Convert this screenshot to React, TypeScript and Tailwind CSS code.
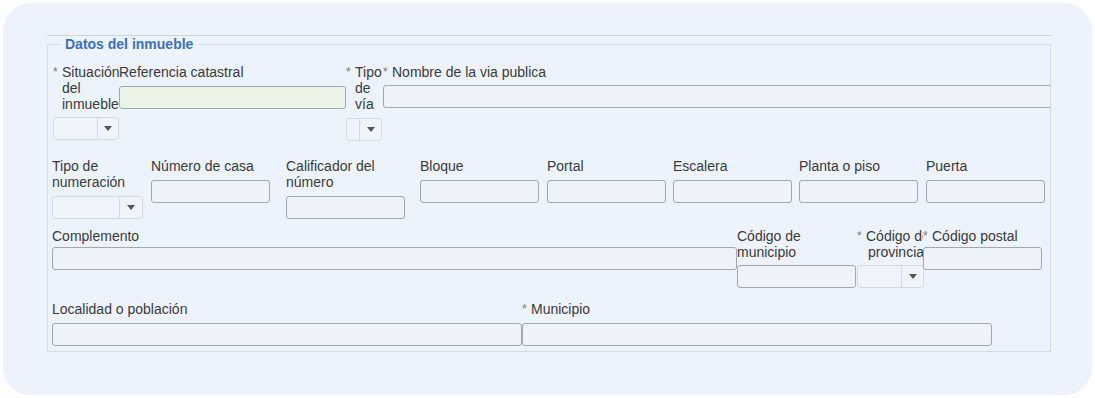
import React from 'react';

const font = { fontFamily: '"Liberation Sans", Arial, sans-serif' };

function Star() {
  return <span className="w-[9px] shrink-0 text-[12px] leading-[16px] text-[#777]">*</span>;
}

function Label({ lines, req }: { lines: string[]; req?: boolean }) {
  return (
    <div className="flex text-[14px] leading-[16px] text-[#3a3a3a]">
      {req && <Star />}
      <div className="whitespace-nowrap">
        {lines.map((l) => (
          <div key={l}>{l}</div>
        ))}
      </div>
    </div>
  );
}

function Input({ w, mt, green }: { w: string; mt: string; green?: boolean }) {
  return (
    <div
      className={`${w} ${mt} h-[23px] rounded-[3px] border border-[#a3a8ae] ${green ? 'bg-[#ebf3e7]' : 'bg-[#eef3fb]'}`}
    />
  );
}

function Select({ w, mt, arrow }: { w: string; mt: string; arrow: string }) {
  return (
    <div className={`${w} ${mt} flex h-[23px] rounded-[3px] border border-[#d3d9e2] bg-[#eff4fb]`}>
      <div className="flex-1" />
      <div className={`${arrow} flex items-center justify-center border-l border-[#d3d9e2]`}>
        <svg width="8" height="5" viewBox="0 0 8 5">
          <path d="M0 0h8L4 5z" fill="#555" />
        </svg>
      </div>
    </div>
  );
}

export default function App() {
  return (
    <div className="h-[398px] w-[1095px] bg-white p-[3px]" style={font}>
      <div className="h-full rounded-[28px] border border-[#eef1f5] bg-[#edf3fc] pl-[43px] pt-[31px]">
        <div className="w-[1004px] border-t border-[#cdd4dd]" />
        <fieldset className="w-[1004px] min-w-0 overflow-hidden border border-[#d5dbe3] pb-[5px] pl-[4px]">
          <legend className="ml-[9px] px-[4px] text-[14px] font-bold leading-[16px] text-[#3b6fc4]">
            Datos del inmueble
          </legend>

          {/* fila 1 */}
          <div className="mt-[12px] flex overflow-hidden pl-[1px]">
            <div className="w-[66px] shrink-0">
              <Label req lines={['Situación', 'del', 'inmueble']} />
              <Select w="w-[66px]" mt="mt-[5px]" arrow="w-[21px]" />
            </div>
            <div className="w-[227px] shrink-0">
              <Label lines={['Referencia catastral']} />
              <Input w="w-[227px]" mt="mt-[6px]" green />
            </div>
            <div className="w-[37px] shrink-0">
              <Label req lines={['Tipo', 'de', 'vía']} />
              <Select w="w-[36px]" mt="mt-[6px]" arrow="w-[22px]" />
            </div>
            <div className="shrink-0">
              <Label req lines={['Nombre de la via publica']} />
              <Input w="w-[700px]" mt="mt-[5px]" />
            </div>
          </div>

          {/* fila 2 */}
          <div className="mt-[17px] flex">
            <div className="w-[99px] shrink-0">
              <Label lines={['Tipo de', 'numeración']} />
              <Select w="w-[91px]" mt="mt-[6px]" arrow="w-[23px]" />
            </div>
            <div className="w-[135px] shrink-0">
              <Label lines={['Número de casa']} />
              <Input w="w-[119px]" mt="mt-[6px]" />
            </div>
            <div className="w-[134px] shrink-0">
              <Label lines={['Calificador del', 'número']} />
              <Input w="w-[119px]" mt="mt-[6px]" />
            </div>
            <div className="w-[127px] shrink-0">
              <Label lines={['Bloque']} />
              <Input w="w-[119px]" mt="mt-[6px]" />
            </div>
            <div className="w-[126px] shrink-0">
              <Label lines={['Portal']} />
              <Input w="w-[119px]" mt="mt-[6px]" />
            </div>
            <div className="w-[126px] shrink-0">
              <Label lines={['Escalera']} />
              <Input w="w-[119px]" mt="mt-[6px]" />
            </div>
            <div className="w-[127px] shrink-0">
              <Label lines={['Planta o piso']} />
              <Input w="w-[119px]" mt="mt-[6px]" />
            </div>
            <div className="shrink-0">
              <Label lines={['Puerta']} />
              <Input w="w-[119px]" mt="mt-[6px]" />
            </div>
          </div>

          {/* fila 3 */}
          <div className="mt-[9px] flex">
            <div className="w-[685px] shrink-0">
              <Label lines={['Complemento']} />
              <Input w="w-[685px]" mt="mt-[3px]" />
            </div>
            <div className="w-[120px] shrink-0">
              <Label lines={['Código de', 'municipio']} />
              <Input w="w-[119px]" mt="mt-[5px]" />
            </div>
            <div className="w-[66px] shrink-0">
              <div className="flex text-[14px] leading-[16px] text-[#3a3a3a]">
                <Star />
                <div className="w-[57px] overflow-hidden whitespace-nowrap">
                  <div>Código de</div>
                  <div className="pl-[2px]">provincia</div>
                </div>
              </div>
              <Select w="w-[67px]" mt="mt-[5px]" arrow="w-[22px]" />
            </div>
            <div className="shrink-0">
              <Label req lines={['Código postal']} />
              <Input w="w-[119px]" mt="mt-[3px]" />
            </div>
          </div>

          {/* fila 4 */}
          <div className="mt-[13px] flex">
            <div className="w-[470px] shrink-0">
              <Label lines={['Localidad o población']} />
              <Input w="w-[470px]" mt="mt-[6px]" />
            </div>
            <div className="shrink-0">
              <Label req lines={['Municipio']} />
              <Input w="w-[470px]" mt="mt-[6px]" />
            </div>
          </div>
        </fieldset>
      </div>
    </div>
  );
}
